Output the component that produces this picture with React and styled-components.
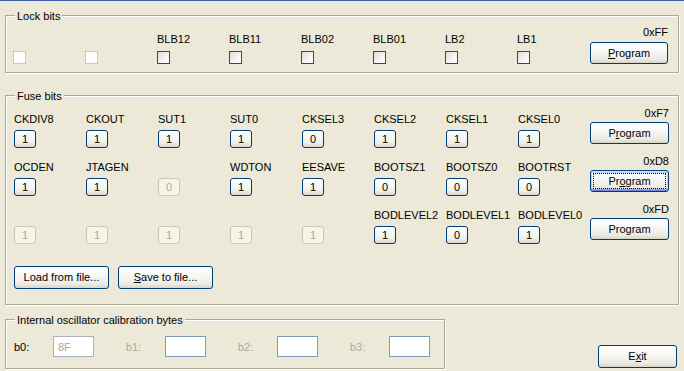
import React from "react";
import styled, { createGlobalStyle, css } from "styled-components";

const Global = createGlobalStyle`
  html, body { margin: 0; padding: 0; background: #ECE9D8; }
  body { font-family: "Liberation Sans", Arial, sans-serif; font-size: 11px; color: #000; }
`;

const Page = styled.div`
  width: 684px;
  height: 371px;
  background: #ECE9D8;
  overflow: hidden;
  display: flex;
  flex-direction: column;
`;

const TopLine = styled.div`
  height: 1px;
  background: #3E5DAE;
  flex: none;
`;

const Content = styled.div`
  display: flex;
  flex-direction: column;
  padding: 14px 5px 0 5px;
`;

const GroupBox = styled.div`
  display: flex;
  flex-direction: column;
  border: 1px solid #ACA899;
  box-shadow: inset 1px 1px 0 #fff, 1px 1px 0 #fff;
  margin-top: ${(p) => p.$gap || 0}px;
  width: ${(p) => (p.$width ? `${p.$width}px` : "auto")};
  box-sizing: border-box;
`;

const Caption = styled.div`
  align-self: flex-start;
  margin: -7px 0 0 9px;
  padding: 0 2px;
  line-height: 14px;
  background: #ECE9D8;
`;

const LockGrid = styled.div`
  display: grid;
  grid-template-columns: repeat(8, 72px) 79px;
  align-items: end;
  padding: 3px 9px 8px 7px;
`;

const BitCell = styled.div`
  display: flex;
  flex-direction: column;
  align-items: flex-start;
  gap: ${(p) => p.$gap}px;
  padding-top: ${(p) => p.$top || 0}px;
`;

const BitLabel = styled.div`
  line-height: 13px;
  height: 13px;
  white-space: nowrap;
`;

const Checkbox = styled.span`
  display: block;
  width: 13px;
  height: 13px;
  box-sizing: border-box;
  border: 1px solid ${(p) => (p.$disabled ? "#CAC8BB" : "#1C5180")};
  background: ${(p) =>
    p.$disabled ? "#FFFFFF" : "linear-gradient(135deg, #DCDCD7 0%, #F3F3F0 55%, #FFFFFF 100%)"};
`;

const ProgramCell = styled.div`
  display: flex;
  flex-direction: column;
  align-items: flex-end;
  gap: ${(p) => p.$gap}px;
`;

const Hex = styled.div`
  line-height: 13px;
  height: 13px;
`;

const buttonBase = css`
  font-family: "Liberation Sans", Arial, sans-serif;
  font-size: 11px;
  color: #000;
  box-sizing: border-box;
  border: 1px solid #003C74;
  border-radius: 3px;
  background: linear-gradient(180deg, #FFFFFF 0%, #F6F6F3 45%, #ECEBE6 80%, #D9D4C8 100%);
  padding: 0;
  margin: 0;
  display: flex;
  align-items: center;
  justify-content: center;
  line-height: 13px;
`;

const PushButton = styled.button`
  ${buttonBase};
  width: ${(p) => p.$w}px;
  height: ${(p) => p.$h}px;
  ${(p) =>
    p.$focused &&
    css`
      box-shadow: inset 0 1px 0 #CEE7FF, inset 0 -1px 0 #6982EE, inset 1px 0 0 #B9D1FA,
        inset -1px 0 0 #B9D1FA, inset 0 2px 0 #BCD4F6, inset 0 -2px 0 #89ADE4;
      outline: 1px dotted #000;
      outline-offset: -4px;
    `}
  u { text-decoration: underline; text-underline-offset: 1px; }
`;

const BitButton = styled.button`
  ${buttonBase};
  width: 22px;
  height: 18px;
  ${(p) =>
    p.$disabled &&
    css`
      border-color: #C9C7BA;
      color: #ACA899;
      background: #F5F4EA;
    `}
`;

const FuseBody = styled.div`
  display: flex;
  flex-direction: column;
  padding: 4px 9px 15px 8px;
`;

const FuseRow = styled.div`
  display: grid;
  grid-template-columns: repeat(8, 72px) 79px;
  align-items: start;
  height: 48px;
`;

const FileRow = styled.div`
  display: flex;
  gap: 9px;
  margin-top: 15px;
`;

const BottomRow = styled.div`
  display: flex;
  justify-content: space-between;
  align-items: flex-end;
  margin-top: 14px;
`;

const OscGrid = styled.div`
  display: grid;
  grid-template-columns: repeat(4, 112px);
  padding: 9px 0 11px 8px;
`;

const OscCell = styled.div`
  display: flex;
  align-items: center;
`;

const OscLabel = styled.span`
  width: 39px;
  color: ${(p) => (p.$disabled ? "#ACA899" : "#000")};
`;

const TextBox = styled.div`
  width: 41px;
  height: 21px;
  box-sizing: border-box;
  border: 1px solid ${(p) => (p.$disabled ? "#A9B2BD" : "#7F9DB9")};
  background: #fff;
  color: #ACA899;
  padding: 0 4px;
  display: flex;
  align-items: center;
`;

const ExitWrap = styled.div`
  margin: 0 2px 1px 0;
`;

const lockBits = [null, null, "BLB12", "BLB11", "BLB02", "BLB01", "LB2", "LB1"];

const fuseRows = [
  {
    hex: "0xF7",
    label: (
      <>
        P<u>r</u>ogram
      </>
    ),
    bits: [
      ["CKDIV8", "1"],
      ["CKOUT", "1"],
      ["SUT1", "1"],
      ["SUT0", "1"],
      ["CKSEL3", "0"],
      ["CKSEL2", "1"],
      ["CKSEL1", "1"],
      ["CKSEL0", "1"],
    ],
  },
  {
    hex: "0xD8",
    focused: true,
    label: (
      <>
        Pr<u>o</u>gram
      </>
    ),
    bits: [
      ["OCDEN", "1"],
      ["JTAGEN", "1"],
      [null, "0"],
      ["WDTON", "1"],
      ["EESAVE", "1"],
      ["BOOTSZ1", "0"],
      ["BOOTSZ0", "0"],
      ["BOOTRST", "0"],
    ],
  },
  {
    hex: "0xFD",
    label: <>Program</>,
    bits: [
      [null, "1"],
      [null, "1"],
      [null, "1"],
      [null, "1"],
      [null, "1"],
      ["BODLEVEL2", "1"],
      ["BODLEVEL1", "0"],
      ["BODLEVEL0", "1"],
    ],
  },
];

const osc = [
  { name: "b0:", value: "8F", labelDisabled: false },
  { name: "b1:", value: "", labelDisabled: true },
  { name: "b2:", value: "", labelDisabled: true },
  { name: "b3:", value: "", labelDisabled: true },
];

export default function App() {
  return (
    <Page>
      <Global />
      <TopLine />
      <Content>
        <GroupBox>
          <Caption>Lock bits</Caption>
          <LockGrid>
            {lockBits.map((name, i) => (
              <BitCell key={i} $gap={5}>
                {name && <BitLabel>{name}</BitLabel>}
                <Checkbox $disabled={!name} />
              </BitCell>
            ))}
            <ProgramCell $gap={3}>
              <Hex>0xFF</Hex>
              <PushButton $w={78} $h={22}>
                <span>
                  <u>P</u>rogram
                </span>
              </PushButton>
            </ProgramCell>
          </LockGrid>
        </GroupBox>

        <GroupBox $gap={22}>
          <Caption>Fuse bits</Caption>
          <FuseBody>
            {fuseRows.map((row, r) => (
              <FuseRow key={r}>
                {row.bits.map(([name, val], i) => (
                  <BitCell key={i} $gap={4} $top={6}>
                    <BitLabel>{name || ""}</BitLabel>
                    <BitButton $disabled={!name}>{val}</BitButton>
                  </BitCell>
                ))}
                <ProgramCell $gap={2}>
                  <Hex>{row.hex}</Hex>
                  <PushButton $w={79} $h={22} $focused={row.focused}>
                    <span>{row.label}</span>
                  </PushButton>
                </ProgramCell>
              </FuseRow>
            ))}
            <FileRow>
              <PushButton $w={95} $h={23}>Load from file...</PushButton>
              <PushButton $w={95} $h={23}>
                <span>
                  <u>S</u>ave to file...
                </span>
              </PushButton>
            </FileRow>
          </FuseBody>
        </GroupBox>

        <BottomRow>
          <GroupBox $width={440}>
            <Caption>Internal oscillator calibration bytes</Caption>
            <OscGrid>
              {osc.map((o) => (
                <OscCell key={o.name}>
                  <OscLabel $disabled={o.labelDisabled}>{o.name}</OscLabel>
                  <TextBox $disabled={o.value !== ""}>{o.value}</TextBox>
                </OscCell>
              ))}
            </OscGrid>
          </GroupBox>
          <ExitWrap>
            <PushButton $w={79} $h={23}>
              <span>
                E<u>x</u>it
              </span>
            </PushButton>
          </ExitWrap>
        </BottomRow>
      </Content>
    </Page>
  );
}
